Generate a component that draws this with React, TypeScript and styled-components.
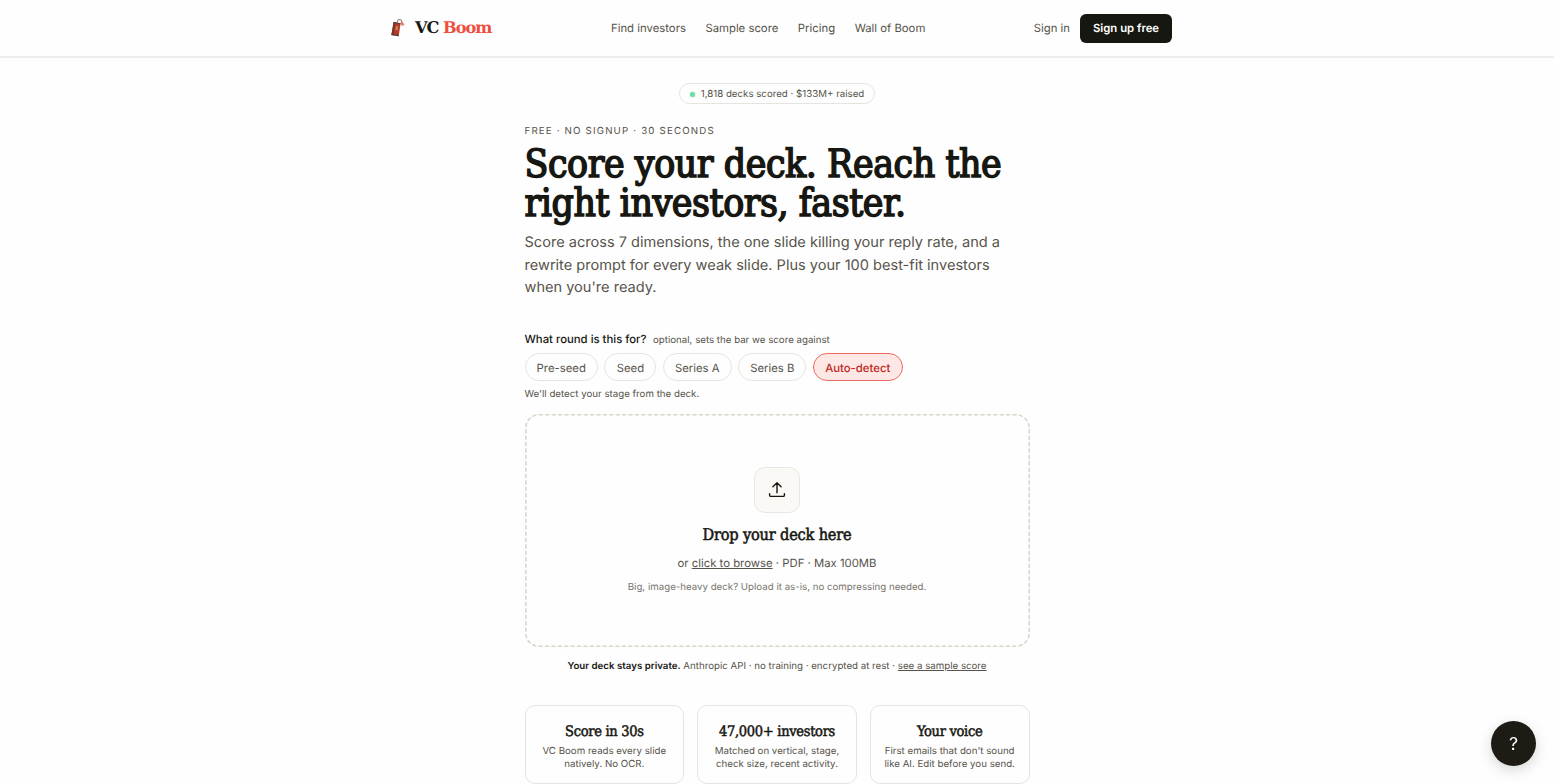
import styled, { createGlobalStyle } from "styled-components";

const GlobalStyle = createGlobalStyle`
  * {
    box-sizing: border-box;
  }
  html, body {
    margin: 0;
    height: 784px;
    overflow: hidden;
    background-color: #fefefe;
  }
  body {
    font-family: Inter, "Liberation Sans", sans-serif;
    font-size: 11.33px;
    color: #57534a;
    text-rendering: geometricPrecision;
  }
  button {
    text-rendering: inherit;
  }
  h1, h2, h3, p {
    margin: 0;
  }
`;

const slab = `"DejaVu Serif Condensed", "DejaVu Serif", serif`;

const Header = styled.header`
  height: 58px;
  border-bottom: 2px solid #ededed;
`;

const HeaderInner = styled.div`
  display: flex;
  align-items: center;
  width: 790px;
  height: 56px;
  margin: 0 auto;
`;

const Logo = styled.a`
  display: flex;
  align-items: center;
  width: 229px;
  padding-left: 7px;
`;

const LogoText = styled.span`
  margin-left: 8px;
  font-family: "DejaVu Serif", serif;
  font-weight: 700;
  font-size: 16.2px;
  letter-spacing: -1px;
  line-height: 22px;
  white-space: nowrap;
  color: #171712;
  em {
    font-style: normal;
    color: #f04e3e;
  }
`;

const Nav = styled.nav`
  display: flex;
  gap: 19.5px;
  flex: 1;
`;

const NavLink = styled.a`
  font-size: 11.33px;
  line-height: 16px;
  white-space: nowrap;
`;

const SignUp = styled.button`
  width: 92px;
  height: 29px;
  margin-left: 10px;
  padding: 0;
  border: 0;
  border-radius: 6px;
  background-color: #171712;
  color: #fff;
  font-family: inherit;
  font-size: 11.33px;
  font-weight: 600;
`;

const Main = styled.main`
  display: flex;
  flex-direction: column;
  width: 505px;
  margin: 25px auto 0;
`;

const Stats = styled.div`
  display: flex;
  align-items: center;
  align-self: center;
  justify-content: center;
  gap: 6px;
  width: 196px;
  height: 21px;
  padding-top: 1px;
  border: 1px solid #e6e4df;
  border-radius: 11px;
  font-size: 9.71px;
  white-space: nowrap;
`;

const Dot = styled.span`
  width: 5px;
  height: 5px;
  border-radius: 50%;
  background-color: #6fdca3;
  box-shadow: 0 0 0 1px #dff8ea;
`;

const Eyebrow = styled.p`
  margin-top: 21px;
  font-size: 9.71px;
  line-height: 14px;
  letter-spacing: 1.17px;
`;

const Title = styled.h1`
  margin-top: 6px;
  font-family: ${slab};
  font-stretch: condensed;
  font-weight: 400;
  font-size: 38.8px;
  line-height: 39px;
  letter-spacing: -0.42px;
  white-space: nowrap;
  color: #171712;
  -webkit-text-stroke: 1.5px #171712;
`;

const Lede = styled.p`
  margin-top: 8px;
  font-size: 14.57px;
  line-height: 22.5px;
`;

const RoundLabel = styled.div`
  display: flex;
  align-items: baseline;
  gap: 6.5px;
  height: 16px;
  margin-top: 32px;
  font-size: 9.71px;
  line-height: 16px;
  b {
    font-size: 11.33px;
    font-weight: 500;
    color: #171712;
  }
`;

const Chips = styled.div`
  display: flex;
  gap: 6.4px;
  margin-top: 6px;
`;

const Chip = styled.button<{ $width: number; $active?: boolean }>`
  width: ${({ $width }) => $width}px;
  height: 28px;
  padding: 2px 0 0;
  border: 1px solid ${({ $active }) => ($active ? "#ee6a5f" : "#e6e4df")};
  border-radius: 14px;
  background-color: ${({ $active }) => ($active ? "#fde8e6" : "#fefefe")};
  color: ${({ $active }) => ($active ? "#c0271c" : "#57534a")};
  font-family: inherit;
  font-size: 11.33px;
  font-weight: ${({ $active }) => ($active ? 500 : 400)};
`;

const Hint = styled.p`
  margin-top: 6px;
  font-size: 9.71px;
  line-height: 15px;
`;

const Drop = styled.section`
  display: flex;
  flex-direction: column;
  align-items: center;
  height: 233px;
  margin-top: 12px;
  position: relative;
`;

const Dashes = styled.svg`
  position: absolute;
  inset: 0;
`;

const UploadBox = styled.div`
  display: flex;
  align-items: center;
  justify-content: center;
  width: 46px;
  height: 46px;
  margin-top: 53px;
  border: 1px solid #e8e6e1;
  border-radius: 11px;
  background-color: #faf9f6;
`;

const DropTitle = styled.h2`
  margin-top: 11px;
  font-family: ${slab};
  font-stretch: condensed;
  font-weight: 400;
  font-size: 16.2px;
  line-height: 22px;
  letter-spacing: -0.18px;
  color: #171712;
  -webkit-text-stroke: 0.55px #171712;
`;

const Browse = styled.p`
  margin-top: 9px;
  font-size: 11.33px;
  line-height: 16px;
`;

const Small = styled.p`
  margin-top: 10px;
  font-size: 9.71px;
  line-height: 14px;
  color: #79756d;
`;

const Link = styled.a`
  text-decoration: underline;
  text-underline-offset: 1px;
`;

const Privacy = styled.p`
  margin-top: 13px;
  font-size: 9.71px;
  line-height: 14px;
  text-align: center;
  b {
    font-weight: 570;
    color: #171712;
  }
`;

const Cards = styled.div`
  display: grid;
  grid-template-columns: repeat(3, 1fr);
  gap: 13px;
  margin-top: 31px;
`;

const Card = styled.div`
  height: 79px;
  padding-top: 17px;
  border: 1px solid #e6e4df;
  border-radius: 10px;
  text-align: center;
  font-size: 9.71px;
  line-height: 13px;
  white-space: nowrap;
`;

const CardTitle = styled.h3`
  margin-bottom: 3px;
  font-family: ${slab};
  font-stretch: condensed;
  font-weight: 400;
  font-size: 14.5px;
  line-height: 19px;
  letter-spacing: -0.3px;
  color: #171712;
  -webkit-text-stroke: 0.5px #171712;
`;

const Help = styled.button`
  position: fixed;
  left: 1491px;
  top: 721px;
  width: 45px;
  height: 45px;
  padding: 1px 0 0;
  border: 0;
  border-radius: 50%;
  background-color: #1e1b14;
  box-shadow: 0 4px 14px rgba(0, 0, 0, 0.16);
  color: #fff;
  font-family: inherit;
  font-size: 17.8px;
  font-weight: 400;
`;

const rounds = [
  { name: "Pre-seed", width: 73.5 },
  { name: "Seed", width: 52 },
  { name: "Series A", width: 69 },
  { name: "Series B", width: 68.2 },
  { name: "Auto-detect", width: 90, active: true },
];

const features = [
  { title: "Score in 30s", lines: ["VC Boom reads every slide", "natively. No OCR."] },
  { title: "47,000+ investors", lines: ["Matched on vertical, stage,", "check size, recent activity."] },
  { title: "Your voice", lines: ["First emails that don't sound", "like AI. Edit before you send."] },
];

function Firecracker() {
  return (
    <svg width="18" height="20" viewBox="0 0 18 20" fill="none">
      <path d="M8.3 4.2C8.3 1 12.6.6 13 3.6" stroke="#8b857b" strokeWidth="1.1" />
      <path d="M11.8 3l2 1 1.9 3.4-2-.5-.5 1.5-1.3-2.4z" fill="#e2786c" />
      <path d="M4.6 4l7 1.3-1.9 12.9-7.3-1.3z" fill="#b53a2b" />
      <path d="M4.6 4l1.8.4-2 12.9-2-.4z" fill="#7d3023" />
      <path d="M4.6 4l7 1.3-.2 1.3-7-1.3zM2.6 15.6l7.3 1.3-.2 1.3-7.3-1.3z" fill="#5a4032" />
      <path d="M6.9 8l2.4.5-.6 3.8-2.4-.5z" fill="#c88a45" />
    </svg>
  );
}

function App() {
  return (
    <>
      <GlobalStyle />
      <Header>
        <HeaderInner>
          <Logo>
            <Firecracker />
            <LogoText>
              VC <em>Boom</em>
            </LogoText>
          </Logo>
          <Nav>
            <NavLink>Find investors</NavLink>
            <NavLink>Sample score</NavLink>
            <NavLink>Pricing</NavLink>
            <NavLink>Wall of Boom</NavLink>
          </Nav>
          <NavLink>Sign in</NavLink>
          <SignUp>Sign up free</SignUp>
        </HeaderInner>
      </Header>
      <Main>
        <Stats>
          <Dot />
          1,818 decks scored · $133M+ raised
        </Stats>
        <Eyebrow>FREE · NO SIGNUP · 30 SECONDS</Eyebrow>
        <Title>
          Score your deck. Reach the
          <br />
          right investors, faster.
        </Title>
        <Lede>
          Score across 7 dimensions, the one slide killing your reply rate, and a
          rewrite prompt for every weak slide. Plus your 100 best-fit investors
          when you're ready.
        </Lede>
        <RoundLabel>
          <b>What round is this for?</b>
          <span>optional, sets the bar we score against</span>
        </RoundLabel>
        <Chips>
          {rounds.map((round) => (
            <Chip key={round.name} $width={round.width} $active={round.active}>
              {round.name}
            </Chip>
          ))}
        </Chips>
        <Hint>We'll detect your stage from the deck.</Hint>
        <Drop>
          <Dashes width="505" height="233" fill="none">
            <rect x="0.8" y="0.8" width="503.4" height="231.4" rx="13" stroke="#d9d6cc" strokeWidth="1.6" strokeDasharray="4.3 2.1" />
          </Dashes>
          <UploadBox>
            <svg width="20" height="20" viewBox="0 0 20 20" fill="none" stroke="#171712" strokeWidth="1.4" strokeLinecap="round" strokeLinejoin="round">
              <path d="M10 12.8V2.8M5.9 6.8L10 2.7l4.1 4.1M2.6 13.8v1.4q0 1.2 1.2 1.2h12.4q1.2 0 1.2-1.2v-1.4" />
            </svg>
          </UploadBox>
          <DropTitle>Drop your deck here</DropTitle>
          <Browse>
            or <Link>click to browse</Link> · PDF · Max 100MB
          </Browse>
          <Small>Big, image-heavy deck? Upload it as-is, no compressing needed.</Small>
        </Drop>
        <Privacy>
          <b>Your deck stays private.</b> Anthropic API · no training · encrypted at rest · <Link>see a sample score</Link>
        </Privacy>
        <Cards>
          {features.map((feature) => (
            <Card key={feature.title}>
              <CardTitle>{feature.title}</CardTitle>
              {feature.lines.map((line) => (
                <p key={line}>{line}</p>
              ))}
            </Card>
          ))}
        </Cards>
      </Main>
      <Help>?</Help>
    </>
  );
}

export default App;
